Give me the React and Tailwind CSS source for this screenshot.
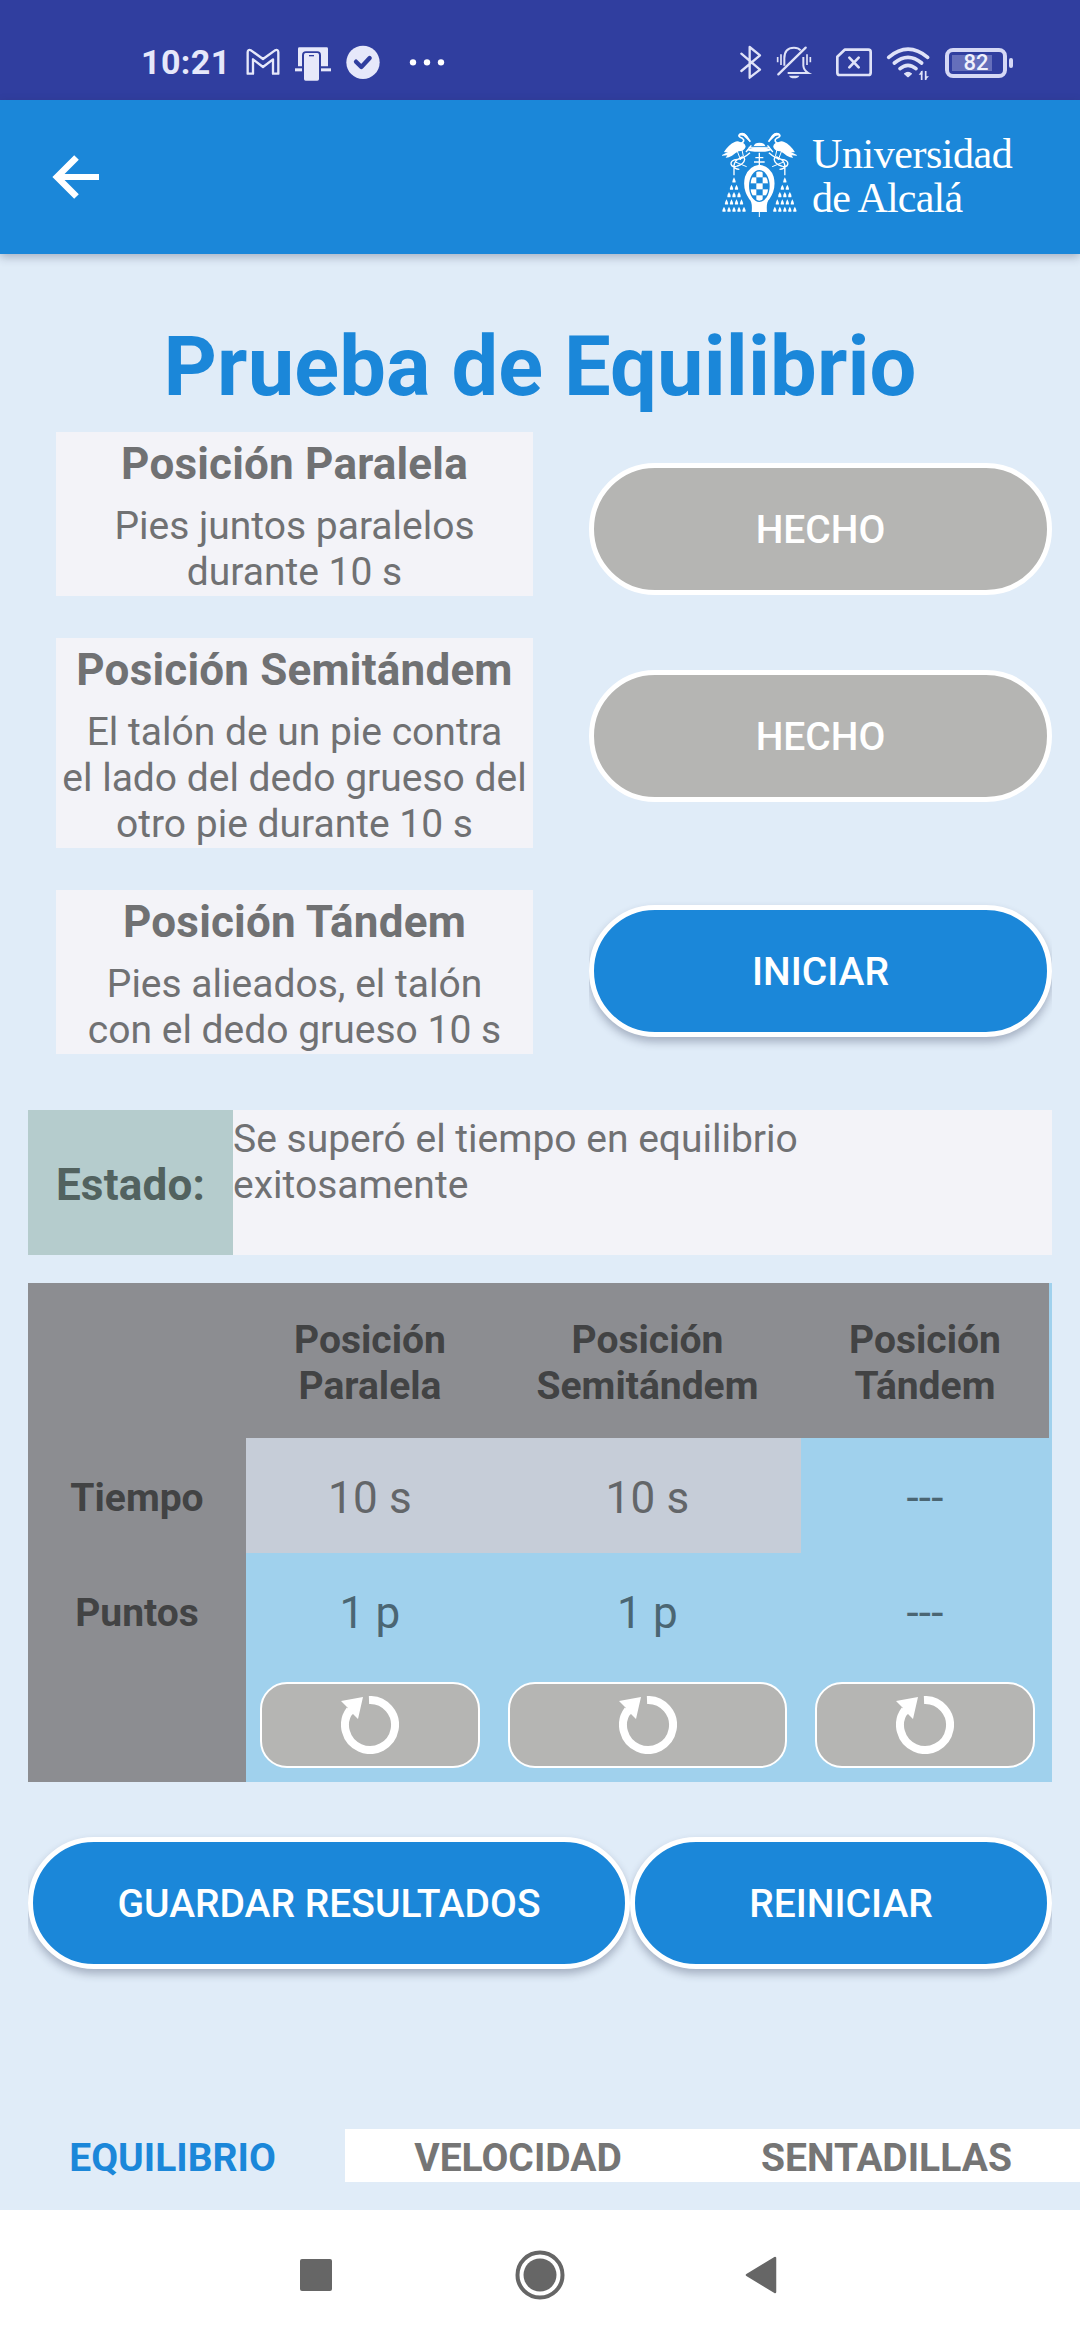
import React from "react";

function StatusLeftIcons() {
  return (
    <svg className="ml-[13px] h-[50px] w-[210px]" viewBox="360 20 630 150" fill="none">
      <path
        d="M383 130 V66 Q383 56 393 60 L429 86 L465 60 Q475 56 475 66 V130 H459 V87 L429 110 L399 87 V130 Z"
        stroke="#e6e8fa" strokeWidth="7" strokeLinejoin="round"
      />
      <path
        d="M534 108 V55 Q534 51 538 51 H620 Q624 51 624 55 V108 H603 V75 Q603 63 592 63 H558 Q546 63 546 75 V108 Z"
        fill="#e6e8fa"
      />
      <rect x="525" y="114" width="21" height="9" fill="#e6e8fa" />
      <rect x="603" y="114" width="30" height="9" fill="#e6e8fa" />
      <rect x="552" y="68" width="45" height="83" rx="5" fill="#e6e8fa" />
      <rect x="567" y="74" width="15" height="4" fill="#303e9f" />
      <circle cx="729" cy="96" r="50" fill="#e6e8fa" />
      <path d="M708 94 L724 110 L749 83" stroke="#303e9f" strokeWidth="13" strokeLinecap="round" strokeLinejoin="round" />
      <circle cx="879" cy="96" r="9.5" fill="#fff" />
      <circle cx="921" cy="96" r="9.5" fill="#fff" />
      <circle cx="963" cy="96" r="9.5" fill="#fff" />
    </svg>
  );
}

function StatusRightIcons() {
  return (
    <svg className="h-[50px] w-[200px]" viewBox="45 20 600 150" fill="none" stroke="#dfe2f8">
      <path d="M61 70 L117 118 L86 142 V50 L117 75 L61 122" strokeWidth="7" strokeLinejoin="round" strokeLinecap="round" />
      <path d="M190 106 V84 Q190 52 219 52 Q232 52 239 60 M247 80 V106 Q248 120 262 128 H200" strokeWidth="6" />
      <path d="M254 52 L172 132" strokeWidth="7" strokeLinecap="round" />
      <path d="M204 136 H235 Q231 144 219 144 Q208 144 204 136Z" fill="#dfe2f8" stroke="none" />
      <path d="M180 72 V104 M170 80 V96 M258 72 V104 M268 80 V96" strokeWidth="5" />
      <path d="M371 58 H442 Q449 58 449 65 V127 Q449 134 442 134 H356 Q349 134 349 127 V79 Z" strokeWidth="8" strokeLinejoin="round" />
      <path d="M385 82 L413 111 M413 82 L385 111" strokeWidth="8" strokeLinecap="round" />
      <path d="M503 81 Q561 32 620 81" strokeWidth="11" strokeLinecap="round" />
      <path d="M520 98 Q561 64 602 98" strokeWidth="11" strokeLinecap="round" />
      <path d="M537 115 Q561 95 585 115" strokeWidth="11" strokeLinecap="round" />
      <path d="M551 130 Q561 122 571 130 L561 139Z" fill="#dfe2f8" strokeWidth="4" strokeLinejoin="round" />
      <path d="M602 149 V122 M614 122 V149" strokeWidth="5" />
      <path d="M593 133 L604 120 V133Z M612 138 H624 L612 150Z" fill="#dfe2f8" stroke="none" />
    </svg>
  );
}

function Battery() {
  return (
    <div className="mt-[2px] ml-[9px] flex items-center">
      <div className="flex h-[30px] w-[62px] items-center rounded-[8px] border-4 border-[#d5d8f5] p-[3px]">
        <div className="flex h-[16px] w-[40px] items-center justify-center bg-[#656fbb]">
          <span className="ml-[8px] text-[22px] leading-none font-medium text-[#f0f1fc]">82</span>
        </div>
      </div>
      <div className="ml-[2px] h-[10px] w-[4px] rounded-[2px] bg-[#d5d8f5]" />
    </div>
  );
}

const TASSELS = [1, 2, 3, 4, 5].flatMap((n, r) =>
  Array.from({ length: n }, (_, i) => ({ x: (i - (n - 1) / 2) * 15, y: 210 + r * 22 }))
);

function Heron() {
  return (
    <g>
      <path d="M66 135 L84 126 Q74 128 72 126 Q86 104 104 96 Q112 92 120 96 Q135 98 137 110 Q134 122 116 124 Q104 130 96 137 Q84 144 77 143 L82 136 L66 137Z" fill="#fff" />
      <path d="M121 102 Q138 92 127 85 Q113 80 118 74 Q130 66 139 78 L151 95" stroke="#fff" strokeWidth="5" fill="none" />
      <path d="M118 71 Q130 66 140 76 L151 97 L136 83 Q130 74 118 77Z" fill="#fff" />
      <path d="M112 124 L122 150 M126 120 L130 138" stroke="#fff" strokeWidth="3" fill="none" />
      <path d="M150 128 Q130 146 112 148 Q92 150 93 162 Q96 174 112 168 Q132 162 134 148 Q132 136 120 144 Q104 152 102 166 Q102 178 118 178 M154 106 L138 126 M102 168 V196" stroke="#fff" strokeWidth="4" fill="none" />
      <path d="M106 156 L140 170" stroke="#fff" strokeWidth="3" />
      {TASSELS.map((t, i) => (
        <path
          key={i}
          d="M0 -8 L3.5 -1 Q6 6 4.5 7.500 H-4.500 Q-6 6 -3.500 -1Z"
          transform={`translate(${102 + t.x} ${t.y})`}
          fill="#fff"
        />
      ))}
    </g>
  );
}

function Crest() {
  return (
    <svg className="mb-[6px] h-[88px] w-[80px]" viewBox="60 60 240 264" fill="none">
      <Heron />
      <g transform="translate(356.500 0) scale(-1 1)">
        <Heron />
      </g>
      <path d="M161 108 Q164 98 178 98 Q193 98 196 108Z" fill="#fff" />
      <ellipse cx="178" cy="119" rx="36" ry="6.500" fill="#fff" />
      <path d="M146 112 H210" stroke="#fff" strokeWidth="3" />
      <path d="M178 128 V172 M166 143 H190 M162 156 H194" stroke="#fff" strokeWidth="4" />
      <path d="M178 164 Q210 168 221 200 Q230 236 208 268 Q198 276 201 306 H155 Q158 276 148 268 Q126 236 135 200 Q146 168 178 164Z" fill="#fff" />
      <ellipse cx="178" cy="228" rx="31" ry="48" fill="#1b87d9" />
      <clipPath id="shield">
        <ellipse cx="178" cy="228" rx="27" ry="44" />
      </clipPath>
      <g clipPath="url(#shield)" fill="#fff">
        <rect x="169" y="184" width="19" height="18" />
        <rect x="150" y="202" width="19" height="18" />
        <rect x="188" y="202" width="19" height="18" />
        <rect x="169" y="220" width="19" height="18" />
        <rect x="150" y="238" width="19" height="18" />
        <rect x="188" y="238" width="19" height="18" />
        <rect x="169" y="256" width="19" height="18" />
      </g>
      <path d="M178 300 V321" stroke="#fff" strokeWidth="3" />
    </svg>
  );
}

function PillButton({ children, disabled = false, className = "" }) {
  return (
    <div className={`h-[132px] [clip-path:inset(-10px_0_-24px_0)] ${className}`}>
      <button
        className={
          "flex h-full w-full items-center justify-center rounded-full border-[5px] border-white pt-[3px] text-[39px] font-medium text-white " +
          (disabled ? "bg-[#b5b5b3]" : "bg-[#1b87d9] shadow-[0_5px_8px_rgba(40,50,80,0.32)]")
        }
      >
        {children}
      </button>
    </div>
  );
}

function TestRow({ title, lines, button, disabled, offset }) {
  return (
    <div className="flex">
      <div className="ml-[56px] w-[477px] bg-[#f3f3f8] pb-px text-center text-[#707173]">
        <h2 className="mb-[7px] text-[44px] leading-[64px] font-bold tracking-[0.2px]">{title}</h2>
        {lines.map((l) => (
          <p key={l} className="text-[39px] leading-[46px] whitespace-nowrap">{l}</p>
        ))}
      </div>
      <PillButton disabled={disabled} className={`ml-[56px] w-[463px] ${offset}`}>{button}</PillButton>
    </div>
  );
}

function ResetIcon() {
  return (
    <svg className="h-[58px] w-[58px]" viewBox="0 0 58 58" fill="none">
      <path d="M28 4 A25 25 0 1 1 9 14" stroke="#fff" strokeWidth="8" />
      <path d="M0 5 L22 1 L17 23 L12 18 L7 22 L3 17 L7 12Z" fill="#fff" />
    </svg>
  );
}

function ResetCell() {
  return (
    <div className="px-[14px] pt-[14px]">
      <button className="flex h-[86px] w-full items-center justify-center rounded-[27px] border-2 border-white bg-[#b5b5b3]">
        <ResetIcon />
      </button>
    </div>
  );
}

function HeadCell({ children, className = "" }) {
  return (
    <div className={`flex items-center justify-center bg-[#8c8d91] pt-[5px] text-center text-[39px] leading-[46px] font-bold text-[#424344] ${className}`}>
      {children}
    </div>
  );
}

function ValueCell({ children, className = "" }) {
  return (
    <div className={`flex items-center justify-center pt-[5px] text-[44px] tracking-[0.2px] ${className}`}>{children}</div>
  );
}

export default function App() {
  return (
    <div className="flex h-[2340px] w-[1080px] flex-col overflow-hidden bg-[#e0ecf8] font-['Roboto',sans-serif]">
      <div className="flex h-[100px] shrink-0 items-center bg-[#303e9f] pt-[24px] pl-[141px]">
        <span className="w-[86px] shrink-0 text-[34px] leading-[50px] font-bold tracking-[0.4px] whitespace-nowrap text-[#e6e8fa]">10:21</span>
        <StatusLeftIcons />
        <div className="ml-[286px]">
          <StatusRightIcons />
        </div>
        <Battery />
      </div>

      <header className="relative flex h-[154px] shrink-0 items-center bg-[#1b87d9] shadow-[0_3px_9px_rgba(40,50,80,0.32)]">
        <svg className="ml-[50px] h-[50px] w-[52px]" viewBox="0 0 52 50" fill="none" stroke="#fff">
          <path d="M10 25 H49" strokeWidth="6" />
          <path d="M26.500 5.500 L7 25 L26.500 44.500" strokeWidth="6.500" />
        </svg>
        <div className="ml-[618px]">
          <Crest />
        </div>
        <div className="mb-[3px] ml-[12px] font-['Liberation_Serif',serif] text-[42px] leading-[44px] whitespace-nowrap text-white">
          <div className="tracking-[-0.45px]">Universidad</div>
          <div className="tracking-[-0.8px]">de Alcalá</div>
        </div>
      </header>

      <h1 className="mt-[48px] h-[130px] shrink-0 text-center text-[83px] leading-[130px] font-bold tracking-[0.15px] text-[#1b87d9]">Prueba de Equilibrio</h1>

      <section className="flex shrink-0 flex-col gap-[42px]">
        <TestRow title="Posición Paralela" lines={["Pies juntos paralelos", "durante 10 s"]} button="HECHO" disabled offset="mt-[31px]" />
        <TestRow
          title="Posición Semitándem"
          lines={["El talón de un pie contra", "el lado del dedo grueso del", "otro pie durante 10 s"]}
          button="HECHO"
          disabled
          offset="mt-[32px]"
        />
        <TestRow title="Posición Tándem" lines={["Pies alieados, el talón", "con el dedo grueso 10 s"]} button="INICIAR" offset="mt-[15px]" />
      </section>

      <section className="mx-[28px] mt-[56px] flex h-[145px] shrink-0">
        <div className="flex w-[205px] items-center justify-center bg-[#b5cccd] pt-[5px] text-[44px] font-bold tracking-[0.2px] text-[#52625f]">Estado:</div>
        <p className="flex-1 bg-[#f3f3f8] pt-[6px] text-[39px] leading-[46px] text-[#707173]">
          Se superó el tiempo en equilibrio
          <br />
          exitosamente
        </p>
      </section>

      <section className="mx-[28px] mt-[28px] grid h-[499px] shrink-0 grid-cols-[218px_248px_307px_248px] grid-rows-[155px_115px_115px_114px] bg-[#a0d1ed]">
        <HeadCell />
        <HeadCell>Posición<br />Paralela</HeadCell>
        <HeadCell>Posición<br />Semitándem</HeadCell>
        <HeadCell>Posición<br />Tándem</HeadCell>
        <HeadCell>Tiempo</HeadCell>
        <ValueCell className="bg-[#c6cdd8] text-[#636669]">10 s</ValueCell>
        <ValueCell className="bg-[#c6cdd8] text-[#636669]">10 s</ValueCell>
        <ValueCell className="text-[#4b6673]">---</ValueCell>
        <HeadCell>Puntos</HeadCell>
        <ValueCell className="text-[#4b6673]">1 p</ValueCell>
        <ValueCell className="text-[#4b6673]">1 p</ValueCell>
        <ValueCell className="text-[#4b6673]">---</ValueCell>
        <HeadCell />
        <ResetCell />
        <ResetCell />
        <ResetCell />
      </section>

      <section className="mx-[28px] mt-[55px] flex shrink-0">
        <PillButton className="w-[602px]">GUARDAR RESULTADOS</PillButton>
        <PillButton className="w-[422px]">REINICIAR</PillButton>
      </section>

      <nav className="mt-[160px] mb-[28px] flex h-[53px] shrink-0 text-[39px] leading-[58px] font-bold whitespace-nowrap text-[#757575]">
        <div className="w-[345px] text-center text-[#1b87d9]">EQUILIBRIO</div>
        <div className="w-[346px] bg-white text-center">VELOCIDAD</div>
        <div className="w-[389px] bg-white pl-[2px] text-center">SENTADILLAS</div>
      </nav>

      <footer className="flex h-[130px] shrink-0 items-center bg-white">
        <div className="ml-[300px] h-[32px] w-[32px] rounded-[2px] bg-[#666666]" />
        <svg className="ml-[183px] h-[50px] w-[50px]" viewBox="0 0 50 50" fill="none">
          <circle cx="25" cy="25" r="22.500" stroke="#666" strokeWidth="4" />
          <circle cx="25" cy="25" r="16.500" fill="#666" />
        </svg>
        <svg className="ml-[180px] h-[38px] w-[32px]" viewBox="0 0 32 38">
          <path d="M30 2 V36 L2 19Z" fill="#666" stroke="#666" strokeWidth="2.500" strokeLinejoin="round" />
        </svg>
      </footer>
    </div>
  );
}
